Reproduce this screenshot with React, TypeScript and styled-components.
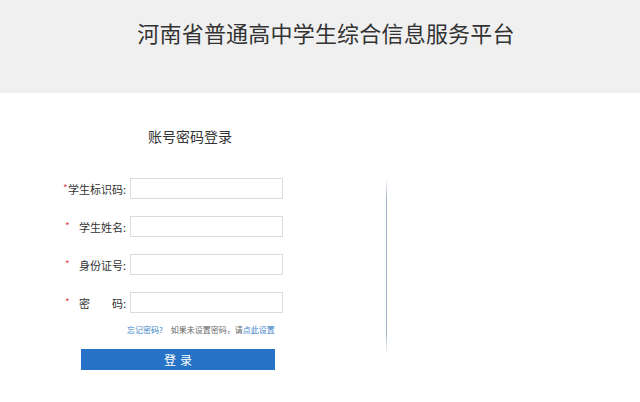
import React from 'react';
import styled, { createGlobalStyle } from 'styled-components';

const fontStack = `"Noto Sans CJK SC", "Noto Sans", "Liberation Sans", sans-serif`;

const GlobalStyle = createGlobalStyle`
  html, body {
    margin: 0;
    padding: 0;
    background: #ffffff;
    font-family: ${fontStack};
  }
  * {
    box-sizing: border-box;
  }
`;

const Page = styled.div`
  width: 640px;
  min-height: 402px;
  background: #ffffff;
`;

const Header = styled.header`
  height: 93px;
  background: #f0f0f0;
  padding: 20px 0 0 12px;
  text-align: center;
`;

const SiteTitle = styled.h1`
  margin: 0;
  font-size: 22px;
  line-height: 24px;
  font-weight: 400;
  color: #333333;
  letter-spacing: 0.2px;
`;

const Main = styled.main`
  display: flex;
  align-items: flex-start;
  padding-left: 63px;
`;

const FormPanel = styled.section`
  width: 323px;
  padding-top: 36px;
`;

const PanelTitle = styled.h2`
  margin: 0 0 35px 85px;
  font-size: 14px;
  line-height: 14px;
  font-weight: 400;
  color: #333333;
`;

const FormRows = styled.div`
  display: flex;
  flex-direction: column;
  gap: 17px;
`;

const Row = styled.div`
  display: flex;
  align-items: center;
  height: 21px;
`;

const Label = styled.label`
  width: 63px;
  margin-right: 4px;
  display: flex;
  align-items: center;
  justify-content: space-between;
  font-size: 11px;
  color: #333333;
`;

const Star = styled.span<{ $tight?: boolean }>`
  color: #e0464f;
  font-size: 10px;
  line-height: 10px;
  align-self: flex-start;
  margin-top: 2px;
  margin-left: ${p => (p.$tight ? '0' : '2px')};
`;

const LabelText = styled.span<{ $spread?: boolean }>`
  display: flex;
  justify-content: ${p => (p.$spread ? 'space-between' : 'flex-end')};
  width: ${p => (p.$spread ? '47px' : 'auto')};
  white-space: nowrap;
`;

const Input = styled.input`
  width: 153px;
  height: 21px;
  border: 1px solid #dcdcdc;
  background: #ffffff;
  outline: none;
  padding: 0 4px;
  font-family: ${fontStack};
`;

const HelpLine = styled.div`
  margin: 12px 0 0 64px;
  font-size: 8px;
  line-height: 10px;
  color: #666666;
  white-space: nowrap;
`;

const HelpLink = styled.a<{ $gap?: boolean }>`
  color: #3a7fc7;
  text-decoration: none;
  margin-right: ${p => (p.$gap ? '8px' : '0')};
`;

const SubmitButton = styled.button`
  display: block;
  margin: 14px 0 0 18px;
  width: 194px;
  height: 21px;
  border: none;
  background: #2672c6;
  color: #ffffff;
  font-family: ${fontStack};
  font-size: 12px;
  letter-spacing: 4px;
  padding: 0 0 0 4px;
`;

const Divider = styled.div`
  width: 1px;
  height: 176px;
  margin-top: 85px;
  background: linear-gradient(
    to bottom,
    rgba(160, 178, 200, 0) 0%,
    #a3b4c9 12%,
    #a3b4c9 88%,
    rgba(160, 178, 200, 0) 100%
  );
`;

const fields = [
  { label: '学生标识码:', tight: true },
  { label: '学生姓名:' },
  { label: '身份证号:' },
  { label: '', spread: true }
];

const App = () => {
  return (
    <Page>
      <GlobalStyle />
      <Header>
        <SiteTitle>河南省普通高中学生综合信息服务平台</SiteTitle>
      </Header>
      <Main>
        <FormPanel>
          <PanelTitle>账号密码登录</PanelTitle>
          <FormRows>
            {fields.map((field, i) => (
              <Row key={i}>
                <Label>
                  <Star $tight={field.tight}>*</Star>
                  {field.spread ? (
                    <LabelText $spread>
                      <span>密</span>
                      <span>码:</span>
                    </LabelText>
                  ) : (
                    <LabelText>{field.label}</LabelText>
                  )}
                </Label>
                <Input type={field.spread ? 'password' : 'text'} />
              </Row>
            ))}
          </FormRows>
          <HelpLine>
            <HelpLink href="#" $gap>
              忘记密码?
            </HelpLink>
            如果未设置密码，请<HelpLink href="#">点此设置</HelpLink>
          </HelpLine>
          <SubmitButton>登录</SubmitButton>
        </FormPanel>
        <Divider />
      </Main>
    </Page>
  );
};

export default App;
